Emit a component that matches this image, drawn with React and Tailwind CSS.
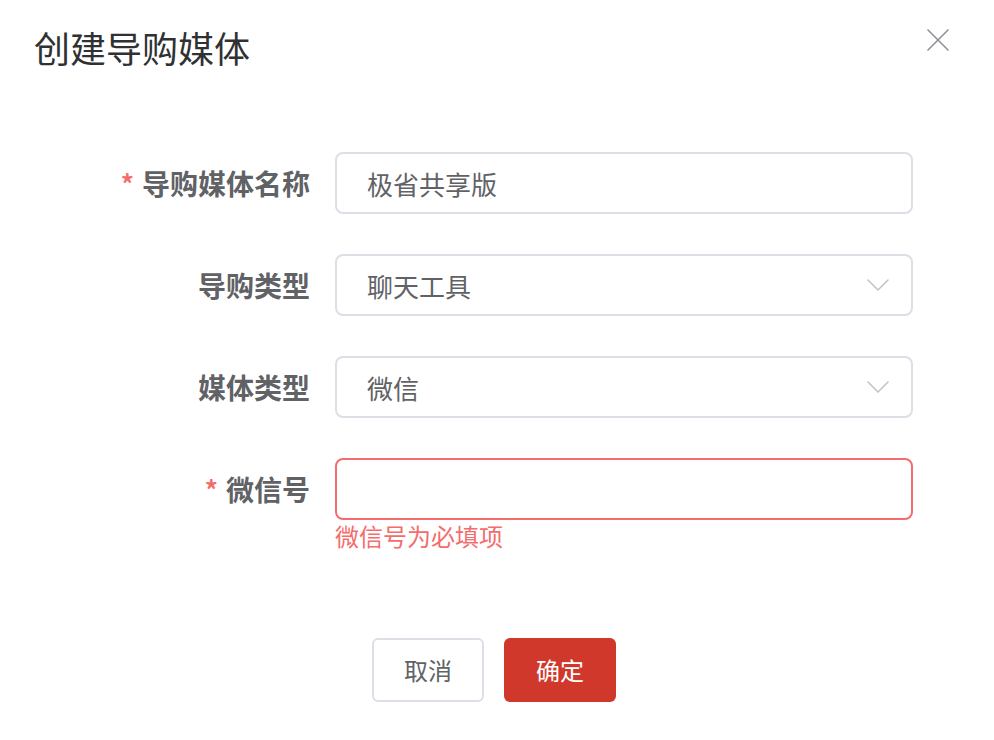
import { X, ChevronDown } from "lucide-react";

const font = { fontFamily: '"Noto Sans CJK SC", "Noto Sans", sans-serif' };

function Row({ label, required, children, error }) {
  return (
    <div className="flex items-start">
      <div className="flex h-[62px] w-[335px] shrink-0 items-center justify-end pr-[25px]">
        {required && <span className="mr-[8px] text-[26px] font-bold leading-none text-[#f56c6c]">*</span>}
        <span className="text-[28px] font-bold text-[#606266]">{label}</span>
      </div>
      <div className="w-[578px]">
        {children}
        {error && <div className="text-[24px] leading-[32px] text-[#f56c6c]">{error}</div>}
      </div>
    </div>
  );
}

function Field({ value, select, invalid }) {
  return (
    <div
      className={`flex h-[62px] items-center justify-between rounded-[8px] border-2 bg-white pl-[30px] pr-[13px] text-[26px] text-[#606266] ${
        invalid ? "border-[#f56c6c]" : "border-[#dcdfe6]"
      }`}
    >
      <span>{value}</span>
      {select && <ChevronDown size={40} strokeWidth={0.95} className="text-[#c0c4cc]" />}
    </div>
  );
}

export default function App() {
  return (
    <div className="h-[740px] w-[994px] bg-white" style={font}>
      <div className="flex items-start justify-between pl-[34px] pr-[36px] pt-[22px]">
        <h1 className="text-[36px] leading-[50px] text-[#303133]">创建导购媒体</h1>
        <X size={40} strokeWidth={1} className="-mt-[2px] text-[#909399]" />
      </div>

      <div className="mt-[80px] flex flex-col gap-[40px]">
        <Row label="导购媒体名称" required>
          <Field value="极省共享版" />
        </Row>
        <Row label="导购类型">
          <Field value="聊天工具" select />
        </Row>
        <Row label="媒体类型">
          <Field value="微信" select />
        </Row>
        <Row label="微信号" required error="微信号为必填项">
          <Field value="" invalid />
        </Row>
      </div>

      <div className="mt-[86px] flex justify-center gap-[20px] pr-[6px]">
        <button className="h-[64px] w-[112px] rounded-[6px] border-2 border-[#dcdfe6] bg-white text-[24px] text-[#606266]">
          取消
        </button>
        <button className="h-[64px] w-[112px] rounded-[6px] bg-[#d0382c] text-[24px] text-white">
          确定
        </button>
      </div>
    </div>
  );
}
